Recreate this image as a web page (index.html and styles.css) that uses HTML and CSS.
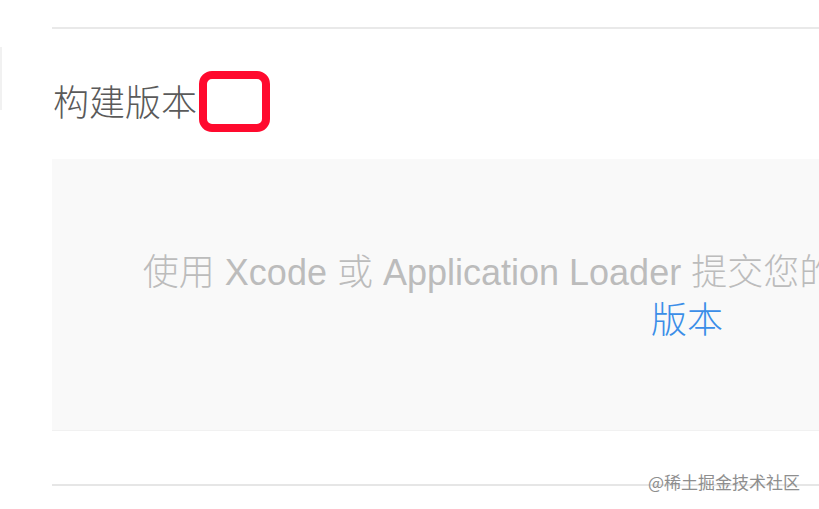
FILE: index.html
```html
<!DOCTYPE html>
<html lang="zh-CN">
<head>
<meta charset="utf-8">
<title>构建版本</title>
<link rel="stylesheet" href="styles.css">
</head>
<body>
<div class="edge"></div>
<main class="page">
  <div class="rule top-rule"></div>
  <section class="section">
    <h2 class="title">构建版本<span class="mark"></span></h2>
    <div class="empty">
      <p class="msg">使用 Xcode 或 Application Loader 提交您的构建版本。上传后可以在<br><a class="link" href="#">版本</a></p>
    </div>
  </section>
  <div class="rule bottom-rule"></div>
</main>
<div class="watermark">@稀土掘金技术社区</div>
</body>
</html>
```

FILE: styles.css
```css
html, body {
  margin: 0;
  padding: 0;
  width: 819px;
  height: 509px;
  overflow: hidden;
  background: #ffffff;
  font-family: "Liberation Sans", "Noto Sans CJK SC", sans-serif;
}

body {
  position: relative;
}

.edge {
  position: absolute;
  left: 0;
  top: 47px;
  width: 2px;
  height: 63px;
  background: #f1f1f1;
}

.page {
  width: 1270px;
  margin-left: 52px;
  padding-top: 27px;
  display: flex;
  flex-direction: column;
}

.rule {
  height: 2px;
  background: #e9e9e9;
}

.section {
  display: flex;
  flex-direction: column;
}

.title {
  margin: 41px 0 0 1px;
  height: 62px;
  display: flex;
  align-items: center;
  font-size: 36px;
  font-weight: 300;
  color: #5a5a5a;
  line-height: 1;
  padding-top: 3px;
}

.mark {
  display: inline-block;
  width: 55px;
  height: 45px;
  border: 8px solid #ff0a2e;
  border-radius: 13px;
  margin-left: 2px;
  margin-top: -5px;
}

.empty {
  margin-top: 24px;
  height: 271px;
  background: #f9f9f9;
  border-bottom: 1px solid #f1f1f1;
  display: flex;
  align-items: center;
  justify-content: center;
}

.msg {
  margin: 0;
  text-align: center;
  font-size: 36px;
  font-weight: 300;
  line-height: 48px;
  color: #bcbcbc;
  padding-top: 4px;
}

.link {
  color: #3b8ee8;
  text-decoration: none;
}

.bottom-rule {
  margin-top: 53px;
  background: #e6e6e6;
}

.watermark {
  position: absolute;
  left: 648px;
  top: 471px;
  font-family: "Noto Sans CJK SC", sans-serif;
  font-size: 17px;
  line-height: 22px;
  color: #8e8e8e;
}
```
